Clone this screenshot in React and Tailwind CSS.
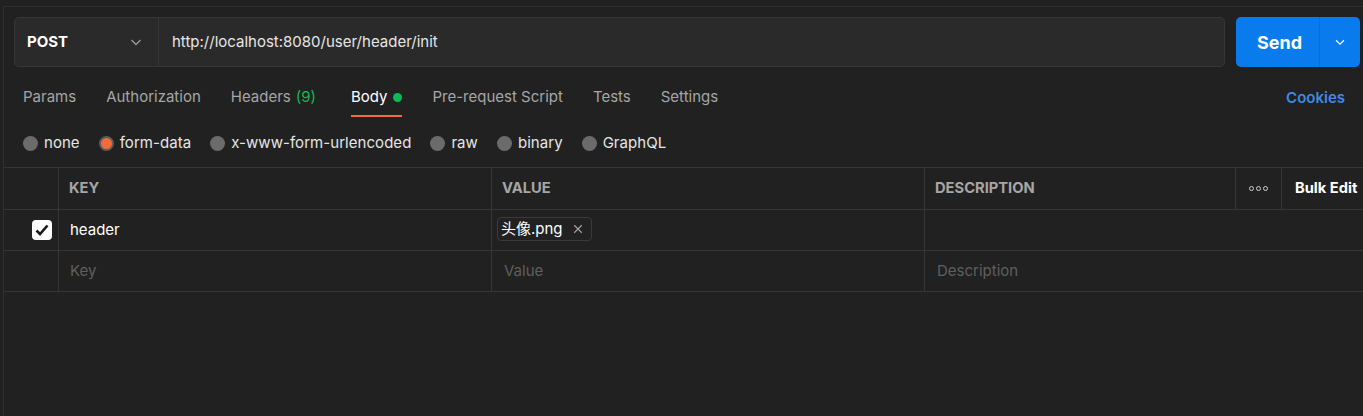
import { useState } from "react";

const tabs = ["Params", "Authorization", "Headers", "Body", "Pre-request Script", "Tests", "Settings"];
const bodyTypes = ["none", "form-data", "x-www-form-urlencoded", "raw", "binary", "GraphQL"];

function Chevron({ className }) {
  return (
    <svg viewBox="0 0 16 16" className={className} fill="none" stroke="currentColor" strokeWidth="1.3">
      <path d="M3.5 6l4.5 4.5L12.5 6" />
    </svg>
  );
}

function RequestBar() {
  return (
    <div className="flex gap-[11px] pl-[10px] pr-[3px] pt-[10px]">
      <div className="flex flex-1 h-[50px] rounded-[5px] border border-[#363636] bg-[#2a2a2a]">
        <div className="flex items-center justify-between w-[144px] pl-[12px] pr-[14px] border-r border-[#363636]">
          <span className="text-[15px] font-bold text-white">POST</span>
          <Chevron className="w-[16px] h-[16px] text-[#9a9a9a]" />
        </div>
        <div className="flex items-center pl-[13px] text-[15px] text-[#e6e6e6]">
          http://localhost:8080/user/header/init
        </div>
      </div>
      <div className="flex h-[50px] w-[124px] rounded-[5px] bg-[#097bed] text-white">
        <div className="flex flex-1 items-center justify-center pl-[4px] text-[18px] font-bold border-r border-[#0a6fd4]">Send</div>
        <div className="flex w-[40px] items-center justify-center">
          <Chevron className="w-[14px] h-[14px]" />
        </div>
      </div>
    </div>
  );
}

function Tabs() {
  return (
    <div className="flex items-center justify-between h-[50px] pl-[19px] pr-[18px]">
      <div className="flex h-full gap-[30px]">
        {tabs.map((t) => (
          <div
            key={t}
            className={
              "flex items-center gap-[6px] h-[50px] pt-[12px] text-[15px] border-b-2 " +
              (t === "Body" ? "text-white border-[#f26b3a]" : "text-[#a6a6a6] border-transparent") +
              (t === "Headers" ? " mr-[5px]" : "")
            }
          >
            <span>{t}</span>
            {t === "Headers" && <span className="text-[#0cbb52] -ml-[1px]">(9)</span>}
            {t === "Body" && <span className="w-[9px] h-[9px] rounded-full bg-[#0cbb52]" />}
          </div>
        ))}
      </div>
      <span className="pt-[12px] text-[15px] font-semibold text-[#3d8be6]">Cookies</span>
    </div>
  );
}

function BodyTypes() {
  const [selected, setSelected] = useState("form-data");
  return (
    <div className="flex items-center h-[50px] pt-[2px] pl-[19px] gap-[19px]">
      {bodyTypes.map((b) => (
        <button key={b} onClick={() => setSelected(b)} className="flex items-center gap-[6px] text-[15px] tracking-[0.05px] text-[#e6e6e6]">
          <span
            className={
              "w-[15px] h-[15px] rounded-full " +
              (selected === b ? "bg-[#f26b3a] border-[2px] border-[#5c5c5c]" : "bg-[#6b6b6b]")
            }
          />
          {b}
        </button>
      ))}
    </div>
  );
}

function Table() {
  const cell = "flex items-center border-r border-[#363636]";
  const head = " pl-[10px] text-[14.7px] font-bold text-[#a6a6a6]";
  return (
    <div className="border-t border-b border-[#363636] text-[15px]">
      <div className="grid grid-cols-[55px_433px_433px_311px_46px_1fr] h-[42px] border-b border-[#363636]">
        <div className={cell} />
        <div className={cell + head}>KEY</div>
        <div className={cell + head}>VALUE</div>
        <div className={cell + head}>DESCRIPTION</div>
        <div className={cell + " justify-center"}>
          <span className="flex gap-[2px]">
            {[0, 1, 2].map((i) => (
              <span key={i} className="w-[5px] h-[5px] rounded-full border border-[#d0d0d0]" />
            ))}
          </span>
        </div>
        <div className="flex items-center pl-[13px] text-[14.7px] font-bold text-white">Bulk Edit</div>
      </div>
      <div className="grid grid-cols-[55px_433px_433px_1fr] h-[41px] border-b border-[#363636]">
        <div className={cell + " justify-end pr-[6px]"}>
          <span className="flex items-center justify-center w-[20px] h-[20px] rounded-[4px] bg-white">
            <svg viewBox="0 0 16 16" className="w-[16px] h-[16px]" fill="none" stroke="#1a1a1a" strokeWidth="2.6">
              <path d="M2.5 8.5l3.5 3.5 7.5-8.5" />
            </svg>
          </span>
        </div>
        <div className={cell + " pl-[11px] text-white"}>header</div>
        <div className={cell + " pl-[5px]"}>
          <span className="flex items-center gap-[10px] h-[24px] -mt-[2px] pl-[3px] pr-[8px] rounded-[4px] border border-[#3a3a3a] text-white">
            头像.png
            <svg viewBox="0 0 12 12" className="w-[10px] h-[10px]" fill="none" stroke="#a6a6a6" strokeWidth="1.3">
              <path d="M1.5 1.5l9 9M10.5 1.5l-9 9" />
            </svg>
          </span>
        </div>
        <div />
      </div>
      <div className="grid grid-cols-[55px_433px_433px_1fr] h-[40px] text-[#5f5f5f]">
        <div className={cell} />
        <div className={cell + " pl-[11px]"}>Key</div>
        <div className={cell + " pl-[12px]"}>Value</div>
        <div className="flex items-center pl-[12px]">Description</div>
      </div>
    </div>
  );
}

export default function App() {
  return (
    <div
      className="h-[416px] w-full bg-[#212121] overflow-hidden"
      style={{ fontFamily: "Inter, 'Noto Sans CJK SC', sans-serif" }}
    >
      <div className="mt-[6px] ml-[3px] h-full border-t border-l border-[#2f2f2f]">
        <RequestBar />
        <Tabs />
        <BodyTypes />
        <Table />
      </div>
    </div>
  );
}
